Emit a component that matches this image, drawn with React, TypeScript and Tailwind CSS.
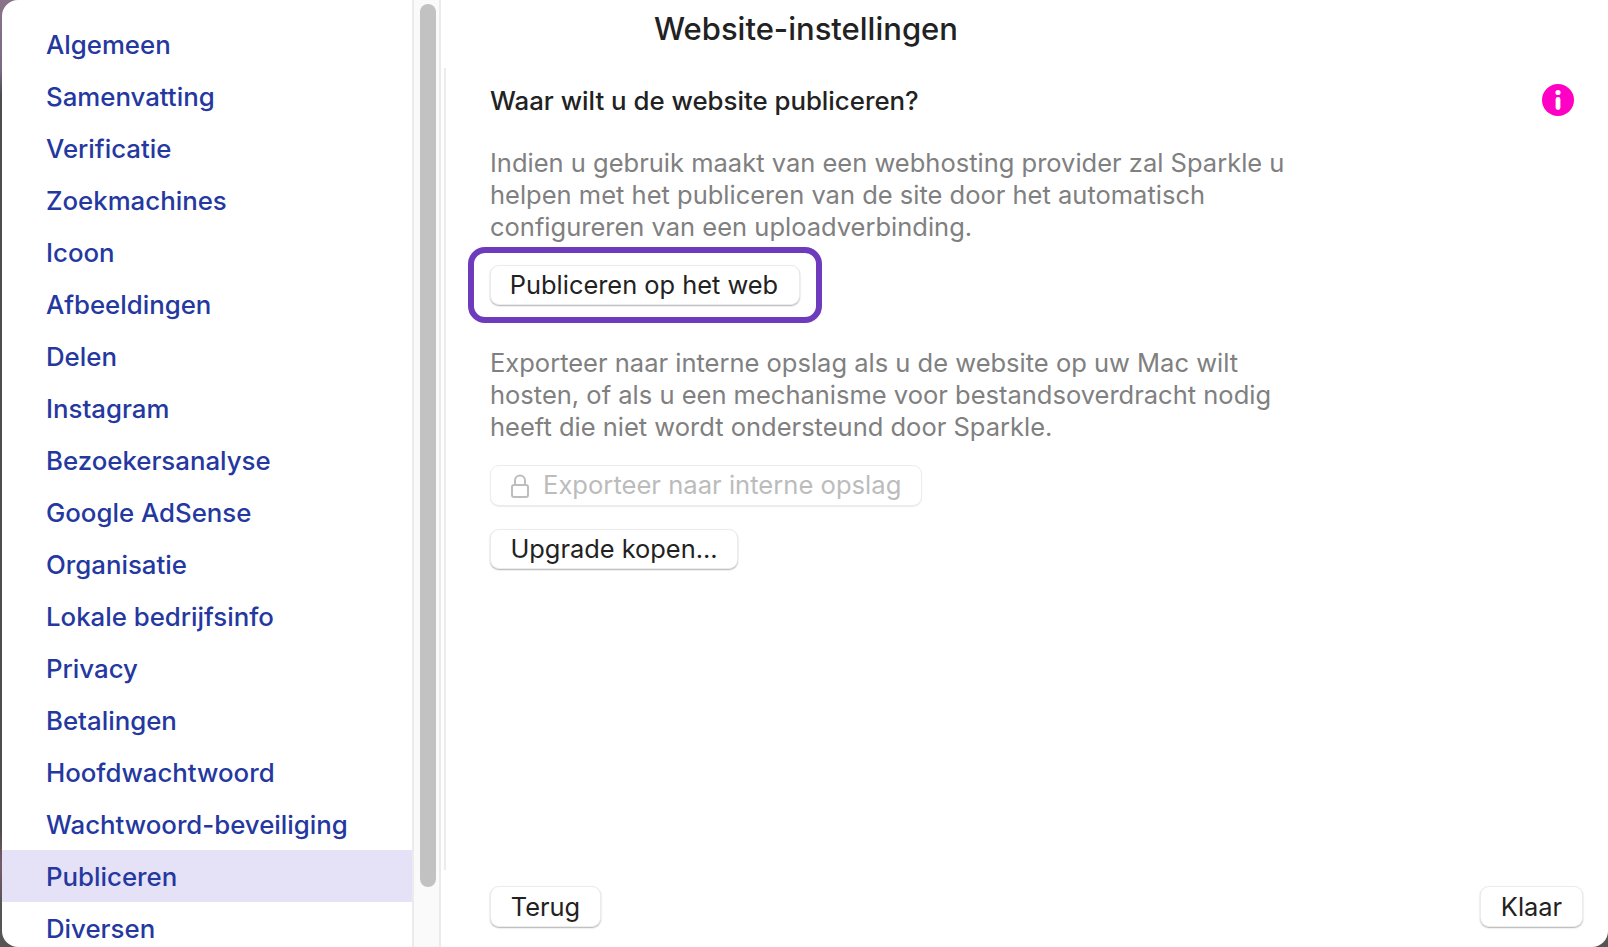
const menuItems = [
  'Algemeen',
  'Samenvatting',
  'Verificatie',
  'Zoekmachines',
  'Icoon',
  'Afbeeldingen',
  'Delen',
  'Instagram',
  'Bezoekersanalyse',
  'Google AdSense',
  'Organisatie',
  'Lokale bedrijfsinfo',
  'Privacy',
  'Betalingen',
  'Hoofdwachtwoord',
  'Wachtwoord-beveiliging',
  'Publiceren',
  'Diversen',
];

const buttonClass =
  'flex items-center justify-center rounded-[9px] bg-white text-[25.4px] leading-none text-[#222] border border-[#ececec] shadow-[0_1px_1.5px_rgba(0,0,0,0.3)]';

function InfoIcon() {
  return (
    <svg width="32" height="32" viewBox="0 0 32 32">
      <circle cx="16" cy="16" r="16" fill="#ff00c4" />
      <circle cx="16" cy="8.5" r="2.6" fill="#fff" />
      <rect x="13.6" y="13" width="4.8" height="13" rx="2.4" fill="#fff" />
    </svg>
  );
}

function LockIcon() {
  return (
    <svg width="18" height="24" viewBox="0 0 18 24" fill="none" stroke="#bdbdbd" strokeWidth="2">
      <path d="M4 11V6.5a5 5 0 0 1 10 0V11" />
      <rect x="1" y="11" width="16" height="12" rx="2" />
    </svg>
  );
}

export default function App() {
  return (
    <div className="flex h-[947px] w-[1608px] overflow-hidden bg-[linear-gradient(180deg,#8a7389_0px,#7a6a85_70px,#4d4d4d_95px,#4d4d4d_830px,#7a5a6a_865px,#555555_905px)] pl-[2px] font-['Inter',sans-serif]">
      <div className="flex h-full flex-1 overflow-hidden rounded-l-[16px] rounded-br-[16px] bg-white">
        {/* sidebar */}
        <nav className="h-full w-[410px] overflow-hidden pt-[18px]">
          {menuItems.map((item) => (
            <div
              key={item}
              className={`flex h-[52px] items-center pl-[44px] pt-[2px] text-[25.8px] font-medium text-[#24389f] ${
                item === 'Publiceren' ? 'bg-[#e5e2f7]' : ''
              }`}
            >
              {item}
            </div>
          ))}
        </nav>

        {/* scrollbar */}
        <div className="h-full w-[29px] border-x-2 border-[#ebebeb] bg-[#fafafa] px-[6px] pt-[4px]">
          <div className="h-[883px] w-[16px] rounded-full bg-[#c2c2c2]" />
        </div>

        {/* content */}
        <div className="flex h-full flex-1 flex-col">
          <h1 className="flex h-[68px] items-center pb-[10px] pl-[213px] text-[31px] font-medium text-[#222]">
            Website-instellingen
          </h1>
          <div className="ml-[3px] flex h-[802px] border-l-2 border-[#ececec] pl-[44px] pr-[34px]">
            <div className="flex w-full flex-col">
              <div className="mt-[16px] flex h-[32px] items-center justify-between">
                <h2 className="pt-[2px] text-[25.8px] font-medium text-[#222]">Waar wilt u de website publiceren?</h2>
                <InfoIcon />
              </div>
              <p className="mt-[31px] w-[820px] text-[25.5px] leading-[32px] text-[#808080]">
                Indien u gebruik maakt van een webhosting provider zal Sparkle u helpen met het publiceren van de site
                door het automatisch configureren van een uploadverbinding.
              </p>
              <div className="relative mt-[22px] w-fit">
                <div className={`${buttonClass} h-[40px] w-[310px] pr-[2px]`}>Publiceren op het web</div>
                <div className="absolute -left-[22px] -right-[22px] -top-[18px] -bottom-[18px] rounded-[17px] border-[6px] border-[#6f3bbd]" />
              </div>
              <p className="mt-[42px] w-[820px] text-[25.5px] leading-[32px] text-[#808080]">
                Exporteer naar interne opslag als u de website op uw Mac wilt hosten, of als u een mechanisme voor
                bestandsoverdracht nodig heeft die niet wordt ondersteund door Sparkle.
              </p>
              <div className="mt-[22px] flex h-[41px] w-[432px] items-center gap-[14px] rounded-[9px] border border-[#ececec] bg-white pl-[20px] text-[25.6px] text-[#bcbcbc] shadow-[0_1px_1px_rgba(0,0,0,0.08)]">
                <LockIcon />
                Exporteer naar interne opslag
              </div>
              <div className={`${buttonClass} mt-[23px] h-[40px] w-[248px]`}>Upgrade kopen...</div>
            </div>
          </div>
          <div className="flex flex-1 items-start justify-between pl-[49px] pr-[25px] pt-[16px]">
            <div className={`${buttonClass} h-[41px] w-[111px]`}>Terug</div>
            <div className={`${buttonClass} h-[41px] w-[103px]`}>Klaar</div>
          </div>
        </div>
      </div>
    </div>
  );
}
